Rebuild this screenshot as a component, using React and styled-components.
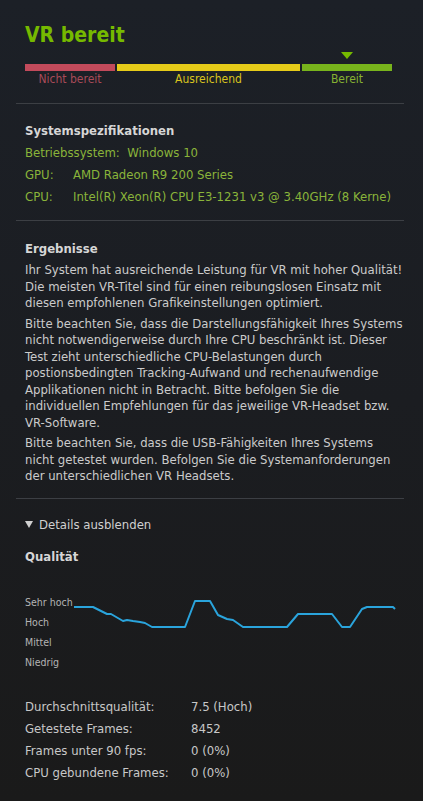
import React from 'react';
import styled, { createGlobalStyle } from 'styled-components';

const GlobalStyle = createGlobalStyle`
  html, body {
    margin: 0;
    padding: 0;
    background: linear-gradient(180deg, #1c2027 0%, #1b1d21 50%, #1a1a1a 100%);
    min-height: 100%;
  }
  body {
    font-family: "DejaVu Sans Condensed", "DejaVu Sans", "Liberation Sans", sans-serif;
    color: #c8c8c8;
  }
`;

const Page = styled.div`
  width: 423px;
  min-height: 801px;
  box-sizing: border-box;
  padding: 22px 19px 0 16px;
`;

const Section = styled.section`
  padding: ${(p) => p.pad || '0 9px'};
  border-bottom: ${(p) => (p.last ? 'none' : '1px solid #3c3f44')};
`;

const Title = styled.h1`
  margin: 0;
  font-size: 21px;
  line-height: 26px;
  font-weight: bold;
  color: #76b900;
`;

const Meter = styled.div`
  display: grid;
  grid-template-columns: 90px 183px 90px;
  column-gap: 2px;
  margin-top: 4px;
  width: 367px;
`;

const Marker = styled.div`
  height: 12px;
  display: flex;
  justify-content: center;
  align-items: flex-start;
`;

const Arrow = styled.div`
  width: 0;
  height: 0;
  border-left: 6px solid transparent;
  border-right: 6px solid transparent;
  border-top: 7px solid #76b900;
`;

const Bar = styled.div`
  height: 7px;
  background: ${(p) => p.color};
`;

const BarLabel = styled.div`
  text-align: center;
  font-size: 12px;
  line-height: 16px;
  color: ${(p) => p.color};
  padding-bottom: 16px;
`;

const Heading = styled.h2`
  margin: ${(p) => p.top || 0} 0 4px;
  font-size: 13px;
  line-height: 18px;
  font-weight: bold;
  color: #d6d6d6;
`;

const SpecGrid = styled.div`
  display: grid;
  grid-template-columns: 48px 1fr;
  row-gap: 4px;
  font-size: 13px;
  line-height: 18px;
  color: #8ab43a;
`;

const SpecWide = styled.div`
  grid-column: 1 / 3;
`;

const Para = styled.p`
  margin: 0 0 4px;
  font-size: 13px;
  line-height: 16.5px;
  color: #cbcbcb;
`;

const Line = styled.span`
  display: block;
  white-space: nowrap;
`;

const Toggle = styled.div`
  display: flex;
  align-items: center;
  gap: 6px;
  font-size: 13px;
  line-height: 18px;
  color: #d0d0d0;
`;

const ToggleArrow = styled.span`
  width: 0;
  height: 0;
  border-left: 4.5px solid transparent;
  border-right: 4.5px solid transparent;
  border-top: 7px solid #d0d0d0;
`;

const Chart = styled.div`
  display: grid;
  grid-template-columns: 48px 327px;
  margin-top: 26px;
`;

const Levels = styled.div`
  display: flex;
  flex-direction: column;
  font-size: 10.5px;
  line-height: 20px;
  color: #b4b4b4;
  white-space: nowrap;
`;

const Stats = styled.div`
  display: grid;
  grid-template-columns: 166px 1fr;
  row-gap: 4px;
  font-size: 13px;
  line-height: 18px;
  color: #c8c8c8;
  margin-top: 26px;
`;

const points = [
  [74, 606], [93, 606], [99, 609], [107, 613], [111, 613], [123, 620], [127, 619],
  [133, 620], [140, 621], [145, 622], [152, 626], [185, 626], [195, 600], [210, 600],
  [218, 614], [227, 618], [233, 619], [243, 626], [287, 626], [298, 613], [332, 613],
  [342, 626], [350, 626], [362, 608], [367, 606], [393, 606], [395, 608],
];

const QualityLine = () => (
  <svg width="327" height="80" viewBox="0 0 327 80">
    <polyline
      points={points.map(([x, y]) => `${x - 73},${y - 591}`).join(' ')}
      fill="none"
      stroke="#2aa4dc"
      strokeWidth="2"
      strokeLinejoin="round"
    />
  </svg>
);

const paragraphs = [
  [
    'Ihr System hat ausreichende Leistung für VR mit hoher Qualität!',
    'Die meisten VR-Titel sind für einen reibungslosen Einsatz mit',
    'diesen empfohlenen Grafikeinstellungen optimiert.',
  ],
  [
    'Bitte beachten Sie, dass die Darstellungsfähigkeit Ihres Systems',
    'nicht notwendigerweise durch Ihre CPU beschränkt ist. Dieser',
    'Test zieht unterschiedliche CPU-Belastungen durch',
    'postionsbedingten Tracking-Aufwand und rechenaufwendige',
    'Applikationen nicht in Betracht. Bitte befolgen Sie die',
    'individuellen Empfehlungen für das jeweilige VR-Headset bzw.',
    'VR-Software.',
  ],
  [
    'Bitte beachten Sie, dass die USB-Fähigkeiten Ihres Systems',
    'nicht getestet wurden. Befolgen Sie die Systemanforderungen',
    'der unterschiedlichen VR Headsets.',
  ],
];

const stats = [
  ['Durchschnittsqualität:', '7.5 (Hoch)'],
  ['Getestete Frames:', '8452'],
  ['Frames unter 90 fps:', '0 (0%)'],
  ['CPU gebundene Frames:', '0 (0%)'],
];

export default function App() {
  return (
    <>
      <GlobalStyle />
      <Page>
        <Section>
          <Title>VR bereit</Title>
          <Meter>
            <Marker />
            <Marker />
            <Marker>
              <Arrow />
            </Marker>
            <Bar color="#c24a5b" />
            <Bar color="#e6cb19" />
            <Bar color="#78b41c" />
            <BarLabel color="#a84a58">Nicht bereit</BarLabel>
            <BarLabel color="#d9c41e">Ausreichend</BarLabel>
            <BarLabel color="#86b232">Bereit</BarLabel>
          </Meter>
        </Section>

        <Section pad="18px 9px 14px">
          <Heading>Systemspezifikationen</Heading>
          <SpecGrid>
            <SpecWide>Betriebssystem:&nbsp; Windows 10</SpecWide>
            <div>GPU:</div>
            <div>AMD Radeon R9 200 Series</div>
            <div>CPU:</div>
            <div>Intel(R) Xeon(R) CPU E3-1231 v3 @ 3.40GHz (8 Kerne)</div>
          </SpecGrid>
        </Section>

        <Section pad="19px 9px 9px">
          <Heading>Ergebnisse</Heading>
          {paragraphs.map((lines, i) => (
            <Para key={i}>
              {lines.map((l) => (
                <Line key={l}>{l}</Line>
              ))}
            </Para>
          ))}
        </Section>

        <Section pad="17px 9px 0" last>
          <Toggle>
            <ToggleArrow />
            Details ausblenden
          </Toggle>
          <Heading top="14px">Qualität</Heading>
          <Chart>
            <Levels>
              <span>Sehr hoch</span>
              <span>Hoch</span>
              <span>Mittel</span>
              <span>Niedrig</span>
            </Levels>
            <QualityLine />
          </Chart>
          <Stats>
            {stats.map(([k, v]) => (
              <React.Fragment key={k}>
                <div>{k}</div>
                <div>{v}</div>
              </React.Fragment>
            ))}
          </Stats>
        </Section>
      </Page>
    </>
  );
}
